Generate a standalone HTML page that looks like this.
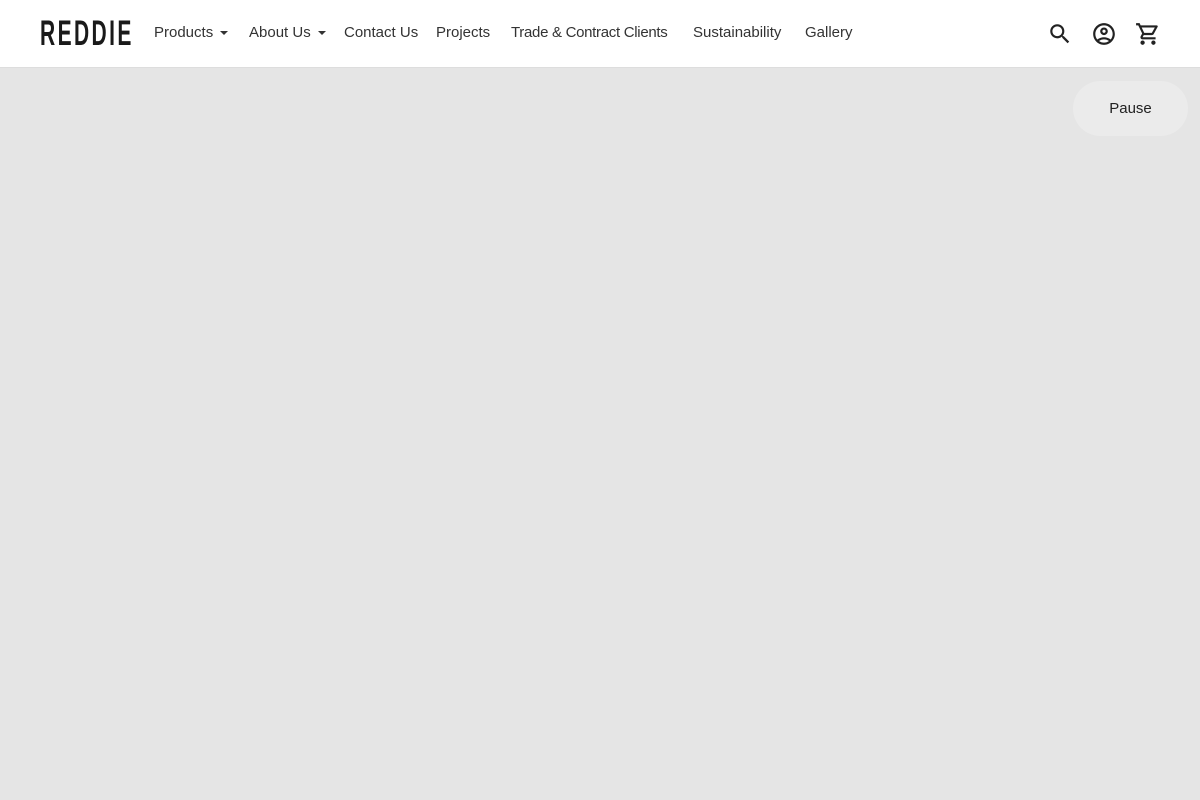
<!DOCTYPE html>
<html><head><meta charset="utf-8"><style>
*{margin:0;padding:0;box-sizing:border-box}
body{width:1200px;height:800px;background:#e5e5e5;font-family:"Liberation Sans",sans-serif;overflow:hidden;position:relative}
header{position:absolute;left:0;top:0;width:1200px;height:68px;background:#fff;border-bottom:1px solid #ddd}
.logo{position:absolute;left:40px;top:16px;font-size:35px;line-height:35px;color:#1a1a1a;letter-spacing:4px;transform:scaleX(0.6);transform-origin:left top;font-weight:bold}
nav{position:absolute;left:154px;top:24px;font-size:15px;color:#333;white-space:nowrap}
nav span{position:absolute;top:0}
.car{display:inline-block;width:0;height:0;border-left:4px solid transparent;border-right:4px solid transparent;border-top:4px solid #333;margin-left:7px;vertical-align:middle}
svg{position:absolute;fill:#222}
.pause{position:absolute;left:1073px;top:81px;width:115px;height:55px;border-radius:28px;background:#ebebeb;color:#222;font-size:15px;text-align:center;line-height:56px}
</style></head><body>
<header>
<div class="logo">REDDIE</div>
<nav>
<span style="left:0">Products<i class="car"></i></span>
<span style="left:95px">About Us<i class="car"></i></span>
<span style="left:190px">Contact Us</span>
<span style="left:282px">Projects</span>
<span style="left:357px;letter-spacing:-0.3px">Trade &amp; Contract Clients</span>
<span style="left:539px">Sustainability</span>
<span style="left:651px">Gallery</span>
</nav>
<svg style="left:1047px;top:21px" width="26" height="26" viewBox="0 0 24 24"><path d="M15.5 14h-.79l-.28-.27A6.47 6.47 0 0 0 16 9.5 6.5 6.5 0 1 0 9.5 16c1.61 0 3.09-.59 4.23-1.57l.27.28v.79l5 4.99L20.49 19l-4.99-5zm-6 0C7.01 14 5 11.99 5 9.5S7.01 5 9.5 5 14 7.01 14 9.5 11.99 14 9.5 14z"/></svg>
<svg style="left:1091px;top:21px" width="26" height="26" viewBox="0 0 24 24"><path d="M12 2C6.48 2 2 6.48 2 12s4.48 10 10 10 10-4.48 10-10S17.52 2 12 2zM7.35 18.5C8.66 17.56 10.26 17 12 17s3.34.56 4.65 1.5c-1.31.94-2.91 1.5-4.65 1.5s-3.34-.56-4.65-1.5zm10.79-1.38a9.947 9.947 0 0 0-12.28 0A7.957 7.957 0 0 1 4 12c0-4.42 3.580-8 8-8s8 3.58 8 8c0 1.950-.7 3.730-1.86 5.12zM12 6c-1.93 0-3.5 1.57-3.5 3.5S10.07 13 12 13s3.5-1.57 3.5-3.5S13.93 6 12 6zm0 5c-.83 0-1.5-.67-1.5-1.5S11.17 8 12 8s1.5.67 1.5 1.5S12.83 11 12 11z"/></svg>
<svg style="left:1135px;top:21px" width="26" height="26" viewBox="0 0 24 24"><path d="M15.55 13c.75 0 1.41-.41 1.75-1.03l3.58-6.49A.996.996 0 0 0 20.010 4H5.21l-.94-2H1v2h2l3.6 7.59-1.35 2.44C4.52 15.37 5.48 17 7 17h12v-2H7l1.1-2h7.45zM6.16 6h12.15l-2.76 5H8.53L6.16 6zM7 18c-1.1 0-1.99.9-1.99 2S5.9 22 7 22s2-.9 2-2-.9-2-2-2zm10 0c-1.1 0-1.99.9-1.99 2s.89 2 1.99 2 2-.9 2-2-.9-2-2-2z"/></svg>
</header>
<div class="pause">Pause</div>
</body></html>
